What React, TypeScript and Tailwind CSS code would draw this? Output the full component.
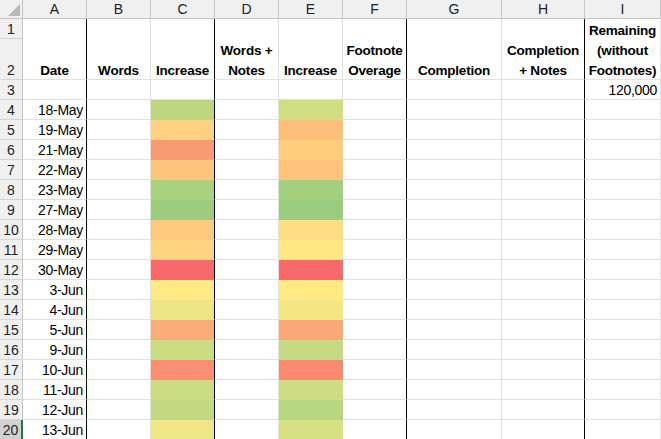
import React from "react";

const cols = [
  { key: "A", w: 64, thick: true },
  { key: "B", w: 64, thick: false },
  { key: "C", w: 64, thick: true },
  { key: "D", w: 64, thick: false },
  { key: "E", w: 64, thick: false },
  { key: "F", w: 64, thick: true },
  { key: "G", w: 95, thick: false },
  { key: "H", w: 83, thick: true },
  { key: "I", w: 76, thick: false },
];

const headers = [
  "Date",
  "Words",
  "Increase",
  "Words + Notes",
  "Increase",
  "Footnote Overage",
  "Completion",
  "Completion + Notes",
  "Remaining (without Footnotes)",
];

const rows: { date: string; c: string; e: string }[] = [
  { date: "18-May", c: "#bcd77f", e: "#d1df82" },
  { date: "19-May", c: "#fed280", e: "#fdbf7b" },
  { date: "21-May", c: "#fa9a75", e: "#fecd7e" },
  { date: "22-May", c: "#fdc47c", e: "#fdc27b" },
  { date: "23-May", c: "#a9d27f", e: "#a2d07e" },
  { date: "27-May", c: "#9ccd7e", e: "#9bcd7e" },
  { date: "28-May", c: "#fecb7e", e: "#ffdd82" },
  { date: "29-May", c: "#fed480", e: "#ffe784" },
  { date: "30-May", c: "#f8696b", e: "#f8696b" },
  { date: "3-Jun", c: "#ffe984", e: "#ffea84" },
  { date: "4-Jun", c: "#eee685", e: "#f3e784" },
  { date: "5-Jun", c: "#fbab77", e: "#fba777" },
  { date: "9-Jun", c: "#c9dc82", e: "#c6db81" },
  { date: "10-Jun", c: "#f98e72", e: "#f98a70" },
  { date: "11-Jun", c: "#cbdc81", e: "#cedd82" },
  { date: "12-Jun", c: "#c2d981", e: "#b6d780" },
  { date: "13-Jun", c: "#efe685", e: "#d6e183" },
];

const font = { fontFamily: '"Liberation Sans", Arial, sans-serif' };

function RowHead({ n, h, selected }: { n: number; h: string; selected?: boolean }) {
  return (
    <div
      className={`w-[23px] shrink-0 flex items-end justify-center border-b border-[#d4d4d4] text-[14px] leading-[18px] text-[#222] ${
        selected ? "bg-[#d2d2d2] border-r-2 border-r-[#217346]" : "bg-[#f0f0f0] border-r border-r-[#c6c6c6]"
      } ${h}`}
    >
      {n}
    </div>
  );
}

export default function App() {
  return (
    <div className="w-[661px] h-[439px] overflow-hidden bg-white text-black" style={font}>
      {/* column letters */}
      <div className="flex h-[19px]">
        <div className="w-[23px] shrink-0 bg-[#f0f0f0] border-r border-b border-[#c6c6c6] flex items-end justify-end p-[2px]">
          <svg width="12" height="12" viewBox="0 0 12 12">
            <polygon points="12,0 12,12 0,12" fill="#b8b8b8" />
          </svg>
        </div>
        {cols.map((c) => (
          <div
            key={c.key}
            style={{ width: c.w }}
            className="shrink-0 bg-[#f0f0f0] border-r border-b border-[#c6c6c6] flex items-center justify-center text-[14px] text-[#222]"
          >
            {c.key}
          </div>
        ))}
      </div>

      {/* rows 1-2 */}
      <div className="flex h-[61px]">
        <div className="flex flex-col">
          <RowHead n={1} h="h-[20px]" />
          <RowHead n={2} h="h-[41px]" />
        </div>
        {cols.map((c, i) => (
          <div
            key={c.key}
            style={{ width: c.w }}
            className={`shrink-0 border-b border-b-[#e1e1e1] border-r flex items-end justify-center text-center font-bold text-[13.5px] leading-[20px] overflow-visible ${
              c.thick ? "border-r-black" : "border-r-[#e1e1e1]"
            }`}
          >
            <span className="block px-[1px] tracking-[-0.2px] translate-y-[2px]">{headers[i]}</span>
          </div>
        ))}
      </div>

      {/* row 3 */}
      <div className="flex h-[20px]">
        <RowHead n={3} h="h-[20px]" />
        {cols.map((c) => (
          <div
            key={c.key}
            style={{ width: c.w }}
            className={`shrink-0 border-b border-b-[#e1e1e1] border-r flex items-end justify-end text-[14px] leading-[17px] tracking-[-0.3px] pr-[3px] ${
              c.thick ? "border-r-black" : "border-r-[#e1e1e1]"
            }`}
          >
            {c.key === "I" ? "120,000" : ""}
          </div>
        ))}
      </div>

      {/* data rows */}
      {rows.map((r, idx) => (
        <div key={r.date} className="flex h-[20px]">
          <RowHead n={idx + 4} h="h-[20px]" selected={idx + 4 === 20} />
          {cols.map((c) => {
            const fill = c.key === "C" ? r.c : c.key === "E" ? r.e : undefined;
            return (
              <div
                key={c.key}
                style={{ width: c.w, backgroundColor: fill, borderBottomColor: fill }}
                className={`shrink-0 border-b border-b-[#e1e1e1] border-r flex items-end justify-end text-[14px] leading-[17px] tracking-[-0.3px] pr-[3px] ${
                  c.thick ? "border-r-black" : fill ? "border-r-transparent" : "border-r-[#e1e1e1]"
                }`}
              >
                {c.key === "A" ? r.date : ""}
              </div>
            );
          })}
        </div>
      ))}
    </div>
  );
}
